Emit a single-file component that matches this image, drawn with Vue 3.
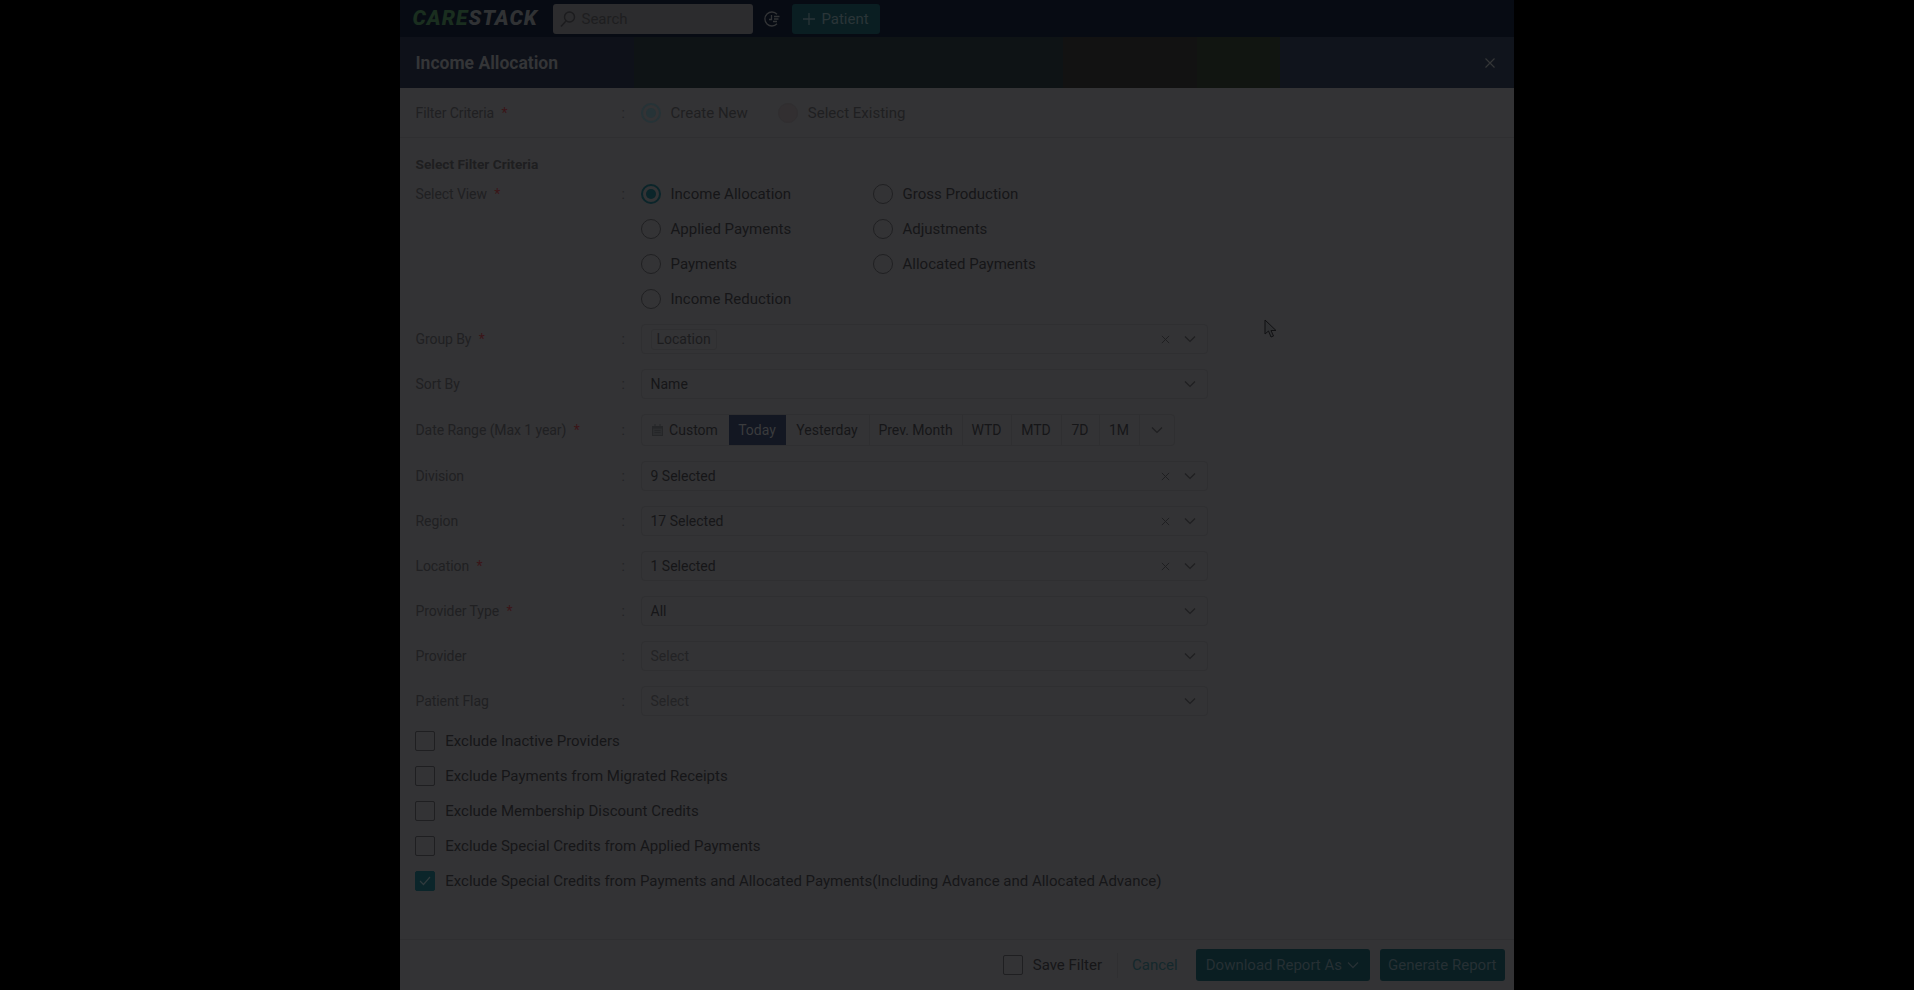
<script setup>
const views = [
  { label: 'Income Allocation', on: true },
  { label: 'Gross Production' },
  { label: 'Applied Payments' },
  { label: 'Adjustments' },
  { label: 'Payments' },
  { label: 'Allocated Payments' },
  { label: 'Income Reduction' },
]
const ranges = [
  { label: 'Today', w: 57, active: true },
  { label: 'Yesterday', w: 84 },
  { label: 'Prev. Month', w: 93 },
  { label: 'WTD', w: 49 },
  { label: 'MTD', w: 50 },
  { label: '7D', w: 38 },
  { label: '1M', w: 40 },
]
const selects = [
  { label: 'Division', value: '9 Selected', clear: true },
  { label: 'Region', value: '17 Selected', clear: true },
  { label: 'Location', value: '1 Selected', clear: true, req: true },
  { label: 'Provider Type', value: 'All', req: true },
  { label: 'Provider', value: 'Select', ph: true },
  { label: 'Patient Flag', value: 'Select', ph: true },
]
const checks = [
  { label: 'Exclude Inactive Providers' },
  { label: 'Exclude Payments from Migrated Receipts' },
  { label: 'Exclude Membership Discount Credits' },
  { label: 'Exclude Special Credits from Applied Payments' },
  { label: 'Exclude Special Credits from Payments and Allocated Payments(Including Advance and Allocated Advance)', on: true },
]
</script>

<template>
  <div class="screen">
    <div class="page">
      <nav class="nav">
        <div class="logo"><span class="logo-care">CARE</span><span class="logo-stack">STACK</span></div>
        <div class="search">
          <svg class="search-icon" width="18" height="18" viewBox="0 0 18 18" fill="none" stroke="#1c1c1e" stroke-width="1.4"><circle cx="10.5" cy="7" r="5"/><path d="M7 11 2 16.5"/></svg>
          <span>Search</span>
        </div>
        <svg class="history" width="18" height="18" viewBox="0 0 18 18" fill="none" stroke="#323436" stroke-width="1.3"><path d="M14 4.2A7 7 0 1 0 14 13.8"/><path d="M8.5 5v4.5H6"/><path d="M11 6.5h5.5M11 9h4.5M10 11.5h4"/></svg>
        <div class="patient">
          <svg width="14" height="14" viewBox="0 0 14 14" stroke="#2a3538" stroke-width="1.3"><path d="M7 1v12M1 7h12"/></svg>
          <span>Patient</span>
        </div>
      </nav>

      <header class="head">
        <h1>Income Allocation</h1>
        <svg width="12" height="12" viewBox="0 0 12 12" stroke="#343537" stroke-width="1.2"><path d="M1.5 1.5l9 9M10.5 1.5l-9 9"/></svg>
      </header>

      <main class="body">
        <div class="row filter-row">
          <label class="lbl">Filter Criteria <i>*</i></label>
          <span class="colon">:</span>
          <div class="inline-radios">
            <span class="opt first dim"><span class="radio on faded"></span>Create New</span>
            <span class="opt dim"><span class="radio faint"></span>Select Existing</span>
          </div>
        </div>

        <div class="section">
          <h2>Select Filter Criteria</h2>
          <div class="row top">
            <label class="lbl">Select View <i>*</i></label>
            <span class="colon">:</span>
            <div class="radio-grid">
              <span v-for="v in views" :key="v.label" class="opt">
                <span class="radio" :class="{ on: v.on }"></span>{{ v.label }}
              </span>
            </div>
          </div>

          <div class="fields">
            <div class="row">
              <label class="lbl">Group By <i>*</i></label>
              <span class="colon">:</span>
              <div class="select">
                <span class="chip">Location</span>
                <svg class="x" viewBox="0 0 10 10"><path d="M1 1l8 8M9 1l-8 8"/></svg>
                <svg class="chev" viewBox="0 0 12 8"><path d="M1 1.5l5 5 5-5"/></svg>
              </div>
            </div>
            <div class="row">
              <label class="lbl">Sort By</label>
              <span class="colon">:</span>
              <div class="select">
                <span class="val">Name</span>
                <svg class="chev" viewBox="0 0 12 8"><path d="M1 1.5l5 5 5-5"/></svg>
              </div>
            </div>
            <div class="row date-row">
              <label class="lbl">Date Range (Max 1 year) <i>*</i></label>
              <span class="colon">:</span>
              <div class="ranges">
                <span class="seg custom">
                  <svg width="11" height="12" viewBox="0 0 11 12" fill="#252628"><path d="M0 2h11v10H0z"/><path d="M1 4.5h9v6.5H1z" fill="#2c2d2f"/><path d="M2.5 0h1v2h-1zM7.5 0h1v2h-1zM2.5 6h6v1h-6zM2.5 8h6v1h-6z"/></svg>
                  Custom
                </span>
                <span
                  v-for="r in ranges"
                  :key="r.label"
                  class="seg"
                  :class="{ active: r.active }"
                  :style="{ width: r.w + 'px' }"
                >{{ r.label }}</span>
                <span class="seg more"><svg class="chev" viewBox="0 0 12 8"><path d="M1 1.5l5 5 5-5"/></svg></span>
              </div>
            </div>
            <div v-for="s in selects" :key="s.label" class="row">
              <label class="lbl">{{ s.label }} <i v-if="s.req">*</i></label>
              <span class="colon">:</span>
              <div class="select">
                <span class="val" :class="{ ph: s.ph }">{{ s.value }}</span>
                <svg v-if="s.clear" class="x" viewBox="0 0 10 10"><path d="M1 1l8 8M9 1l-8 8"/></svg>
                <svg class="chev" viewBox="0 0 12 8"><path d="M1 1.5l5 5 5-5"/></svg>
              </div>
            </div>
          </div>

          <div class="checks">
            <div v-for="c in checks" :key="c.label" class="check-row">
              <span class="box" :class="{ on: c.on }">
                <svg v-if="c.on" width="12" height="10" viewBox="0 0 12 10" fill="none" stroke="#2f3a3d" stroke-width="1.2"><path d="M1 5l3.5 3.5L11 1"/></svg>
              </span>
              {{ c.label }}
            </div>
          </div>
        </div>
      </main>

      <footer class="foot">
        <span class="save"><span class="box"></span>Save Filter</span>
        <span class="cancel">Cancel</span>
        <button class="btn dl">Download Report As
          <svg width="12" height="8" viewBox="0 0 12 8" fill="none" stroke="#263034" stroke-width="1.3"><path d="M1 1.5l5 5 5-5"/></svg>
        </button>
        <button class="btn gen">Generate Report</button>
      </footer>
    </div>

    <svg class="cursor" width="14" height="20" viewBox="0 0 14 20" fill="#2f3032" stroke="#111113" stroke-width="1"><path d="M1 1v14l3.5-3 2.5 6 2.5-1-2.5-5.5H12z"/></svg>
  </div>
</template>

<style>
html, body { margin: 0; background: #000; }
</style>

<style scoped>
.screen {
  width: 1914px;
  height: 990px;
  background: #000;
  position: relative;
  overflow: hidden;
  font-family: Roboto, "Liberation Sans", sans-serif;
  font-size: 14px;
  color: #161618;
  display: flex;
  justify-content: center;
}
.page {
  width: 1114px;
  margin-left: -1px;
  height: 990px;
  background: #333335;
  display: flex;
  flex-direction: column;
}
.nav {
  height: 37px;
  flex: none;
  background: #070b13;
  display: flex;
  align-items: center;
  padding-left: 13px;
  box-sizing: border-box;
}
.logo {
  width: 140px;
  font-size: 21px;
  font-weight: 900;
  font-style: italic;
  letter-spacing: 1px;
  line-height: 1;
  white-space: nowrap;
}
.logo-care { color: #1a2e1f; }
.logo-stack { color: #303234; }
.search {
  width: 200px;
  height: 30px;
  background: #2c2c2e;
  border-radius: 3px;
  display: flex;
  align-items: center;
  gap: 5px;
  padding-left: 6px;
  box-sizing: border-box;
  color: #1e1e20;
  font-size: 15px;
}
.history { margin-left: 10px; }
.patient {
  margin-left: 11px;
  width: 88px;
  height: 30px;
  border-radius: 3px;
  background: #0a1e22;
  color: #2a3538;
  font-size: 15px;
  display: flex;
  align-items: center;
  justify-content: center;
  gap: 5px;
}
.head {
  height: 51px;
  flex: none;
  display: flex;
  align-items: center;
  justify-content: space-between;
  padding: 0 18px 0 16px;
  box-sizing: border-box;
  background: linear-gradient(90deg, #0e1119 0, #0e1119 21%, #0e1315 21%, #0e1315 59.5%, #121212 59.5%, #121212 71.5%, #111511 71.5%, #111511 79%, #10141c 79%, #10141c 100%);
}
.head h1 {
  margin: 0;
  font-size: 17.5px;
  font-weight: 700;
  color: #343537;
}
.body { flex: 1; padding: 0 15px; min-height: 0; }
.row {
  display: grid;
  grid-template-columns: 207px 19px 567px;
  align-items: center;
  min-height: 30px;
}
.row.top { align-items: start; }
.row.top .lbl, .row.top .colon { line-height: 30px; }
.filter-row {
  margin: 10px -15px 0;
  padding: 0 0 9px 15px;
  border-bottom: 1px solid #2f2f31;
}
.lbl { color: #202022; padding-left: 1px; letter-spacing: -.08px; }
.lbl i { color: #3b1518; font-style: normal; margin-left: 4px; }
.colon { color: #232325; }
.inline-radios { display: flex; }
.opt {
  display: inline-flex;
  align-items: center;
  gap: 10px;
  height: 30px;
  white-space: nowrap;
  font-size: 15px;
}
.dim { color: #1f1f21; }
.opt.first { margin-right: 30px; }
.radio {
  width: 20px;
  height: 20px;
  border-radius: 50%;
  border: 1px solid #202022;
  box-sizing: border-box;
  display: inline-block;
  flex: none;
  position: relative;
}
.radio.on { border: 2px solid #0b252a; }
.radio.on::after {
  content: "";
  position: absolute;
  inset: 3px;
  border-radius: 50%;
  background: #0b252a;
}
.radio.faded { border-color: #263337; }
.radio.faded::after { background: #263337; }
.radio.faint { border-color: #302e30; background: #322f31; }
.section { padding-top: 16px; }
h2 {
  margin: 0 0 5px 1px;
  font-size: 13.7px;
  font-weight: 700;
  color: #1e1e20;
  line-height: 20px;
}
.radio-grid {
  display: grid;
  grid-template-columns: 232px 1fr;
  grid-auto-rows: 35px;
  align-items: center;
  justify-items: start;
  margin-top: -2.5px;
}
.fields {
  display: flex;
  flex-direction: column;
  gap: 15px;
  margin-top: 7.5px;
}
.select {
  height: 30px;
  border: 1px solid #2f2f31;
  border-radius: 4px;
  box-sizing: border-box;
  display: flex;
  align-items: center;
  padding: 0 11px 0 9px;
}
.val { flex: 1; }
.val.ph { color: #232325; }
.chip {
  border: 1px solid #2f2f31;
  border-radius: 3px;
  padding: 0 5px;
  height: 21px;
  line-height: 18px;
  box-sizing: border-box;
  color: #1c1c1e;
  margin-right: auto;
}
.x {
  width: 9px;
  height: 9px;
  fill: none;
  stroke: #1f1f21;
  stroke-width: 1.1;
  margin-right: 14px;
  flex: none;
}
.chev {
  width: 12px;
  height: 8px;
  fill: none;
  stroke: #1f1f21;
  stroke-width: 1.2;
  flex: none;
}
.date-row { min-height: 32px; }
.ranges {
  display: flex;
  width: 534px;
  height: 32px;
  border: 1px solid #2f2f31;
  border-radius: 4px;
  box-sizing: border-box;
  overflow: hidden;
}
.seg {
  display: flex;
  align-items: center;
  justify-content: center;
  gap: 6px;
  border-right: 1px solid #2f2f31;
  box-sizing: border-box;
  flex: none;
}
.seg.custom { width: 87px; border-right: none; }
.seg.active { background: #131722; color: #3a3b3d; border-right: none; }
.seg.more { border-right: none; flex: 1; }
.checks { margin-top: 7px; display: flex; flex-direction: column; }
.check-row {
  height: 35px;
  display: flex;
  align-items: center;
  gap: 7px;
  font-size: 15px;
  white-space: pre;
}
.box {
  width: 20px;
  height: 20px;
  border: 1px solid #1f1f21;
  border-radius: 2px;
  box-sizing: border-box;
  display: inline-flex;
  align-items: center;
  justify-content: center;
  flex: none;
}
.box.on { background: #0b252a; border-color: #0b252a; }
.foot {
  height: 51px;
  flex: none;
  border-top: 1px solid #2f2f31;
  box-sizing: border-box;
  display: flex;
  align-items: center;
  justify-content: flex-end;
  padding-right: 9px;
}
.save {
  display: flex;
  align-items: center;
  gap: 10px;
  font-size: 15px;
  padding-right: 15px;
  border-right: 1px solid #2f2f31;
  line-height: 25px;
}
.cancel {
  color: #14282c;
  font-size: 15px;
  margin: 0 18px 0 14px;
}
.btn {
  height: 32px;
  padding: 0 8px;
  border: none;
  border-radius: 3px;
  background: #0a1e22;
  color: #263034;
  font: 400 15px Roboto, "Liberation Sans", sans-serif;
  display: inline-flex;
  align-items: center;
  gap: 5px;
}
.btn.dl { margin-right: 10px; padding: 0 11px 0 10px; }
.cursor { position: absolute; left: 1264px; top: 319px; }
</style>
